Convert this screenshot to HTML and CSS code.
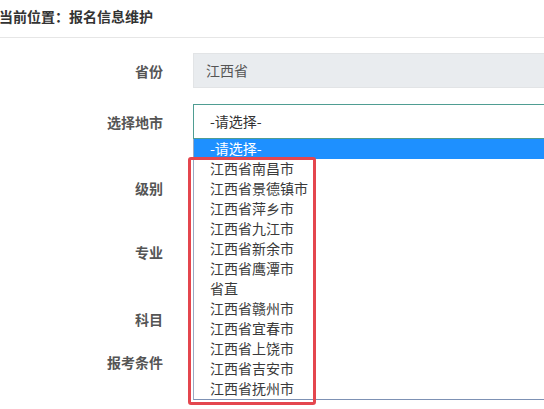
FILE: index.html
```html
<!DOCTYPE html>
<html lang="zh-CN">
<head>
<meta charset="utf-8">
<title>报名信息维护</title>
<link rel="stylesheet" href="styles.css">
</head>
<body>
<div class="page">
  <div class="crumb">当前位置：报名信息维护</div>
  <div class="form">
    <div class="row row-first">
      <div class="label">省份</div>
      <div class="field field-readonly">江西省</div>
    </div>
    <div class="row row-select">
      <div class="label">选择地市</div>
      <div class="field field-select">
        -请选择-
        <ul class="dropdown">
          <li class="opt opt-active">-请选择-</li>
          <li class="opt">江西省南昌市</li>
          <li class="opt">江西省景德镇市</li>
          <li class="opt">江西省萍乡市</li>
          <li class="opt">江西省九江市</li>
          <li class="opt">江西省新余市</li>
          <li class="opt">江西省鹰潭市</li>
          <li class="opt">省直</li>
          <li class="opt">江西省赣州市</li>
          <li class="opt">江西省宜春市</li>
          <li class="opt">江西省上饶市</li>
          <li class="opt">江西省吉安市</li>
          <li class="opt">江西省抚州市</li>
        </ul>
        <div class="highlight"></div>
      </div>
    </div>
    <div class="row row-jibie">
      <div class="label">级别</div>
    </div>
    <div class="row row-zhuanye">
      <div class="label">专业</div>
    </div>
    <div class="row row-kemu">
      <div class="label">科目</div>
    </div>
    <div class="row row-tiaojian">
      <div class="label">报考条件</div>
    </div>
  </div>
</div>
</body>
</html>
```
FILE: styles.css
```css
html, body {
  margin: 0;
  padding: 0;
  background: #ffffff;
  overflow: hidden;
}
body {
  width: 544px;
  height: 409px;
  font-family: "Noto Sans CJK SC", "Noto Sans", sans-serif;
  font-size: 14px;
  color: #333333;
}
.page {
  width: 544px;
}
.crumb {
  height: 37px;
  line-height: 32px;
  font-weight: bold;
  color: #333333;
  border-bottom: 1px solid #e6e6e6;
  text-indent: -1px;
}
.form {
  display: flex;
  flex-direction: column;
}
.row {
  display: flex;
  align-items: center;
}
.label {
  width: 163px;
  text-align: right;
  font-weight: bold;
  color: #555555;
  line-height: 20px;
  flex: none;
}
.field {
  margin-left: 30px;
  flex: 1;
  box-sizing: border-box;
  height: 35px;
  line-height: 33px;
  padding-left: 12px;
}
.row-first {
  margin-top: 15px;
}
.field-readonly {
  background: #e9ecef;
  border: 1px solid #e2e4e6;
  border-right: none;
  color: #555555;
}
.row-select {
  margin-top: 16px;
}
.field-select {
  position: relative;
  border: 1px solid #4f9d92;
  border-right: none;
  padding-left: 16px;
  color: #333333;
}
.dropdown {
  position: absolute;
  top: 34px;
  left: -1px;
  right: 0;
  margin: 0;
  padding: 0;
  list-style: none;
  background: #ffffff;
  border-left: 1px solid #9aaac4;
  border-bottom: 1px solid #7d91b4;
  z-index: 2;
}
.opt {
  height: 20px;
  line-height: 19px;
  padding-left: 16px;
  color: #3a3a3a;
  white-space: nowrap;
}
.opt-active {
  background: #1e90ff;
  color: #ffffff;
}
.highlight {
  position: absolute;
  left: -6px;
  top: 52px;
  width: 128px;
  height: 248px;
  box-sizing: border-box;
  border: 3px solid #e4464e;
  border-radius: 3px;
  z-index: 3;
}
.row-jibie {
  margin-top: 39px;
}
.row-zhuanye {
  margin-top: 44px;
}
.row-kemu {
  margin-top: 47px;
}
.row-tiaojian {
  margin-top: 23px;
}
```
